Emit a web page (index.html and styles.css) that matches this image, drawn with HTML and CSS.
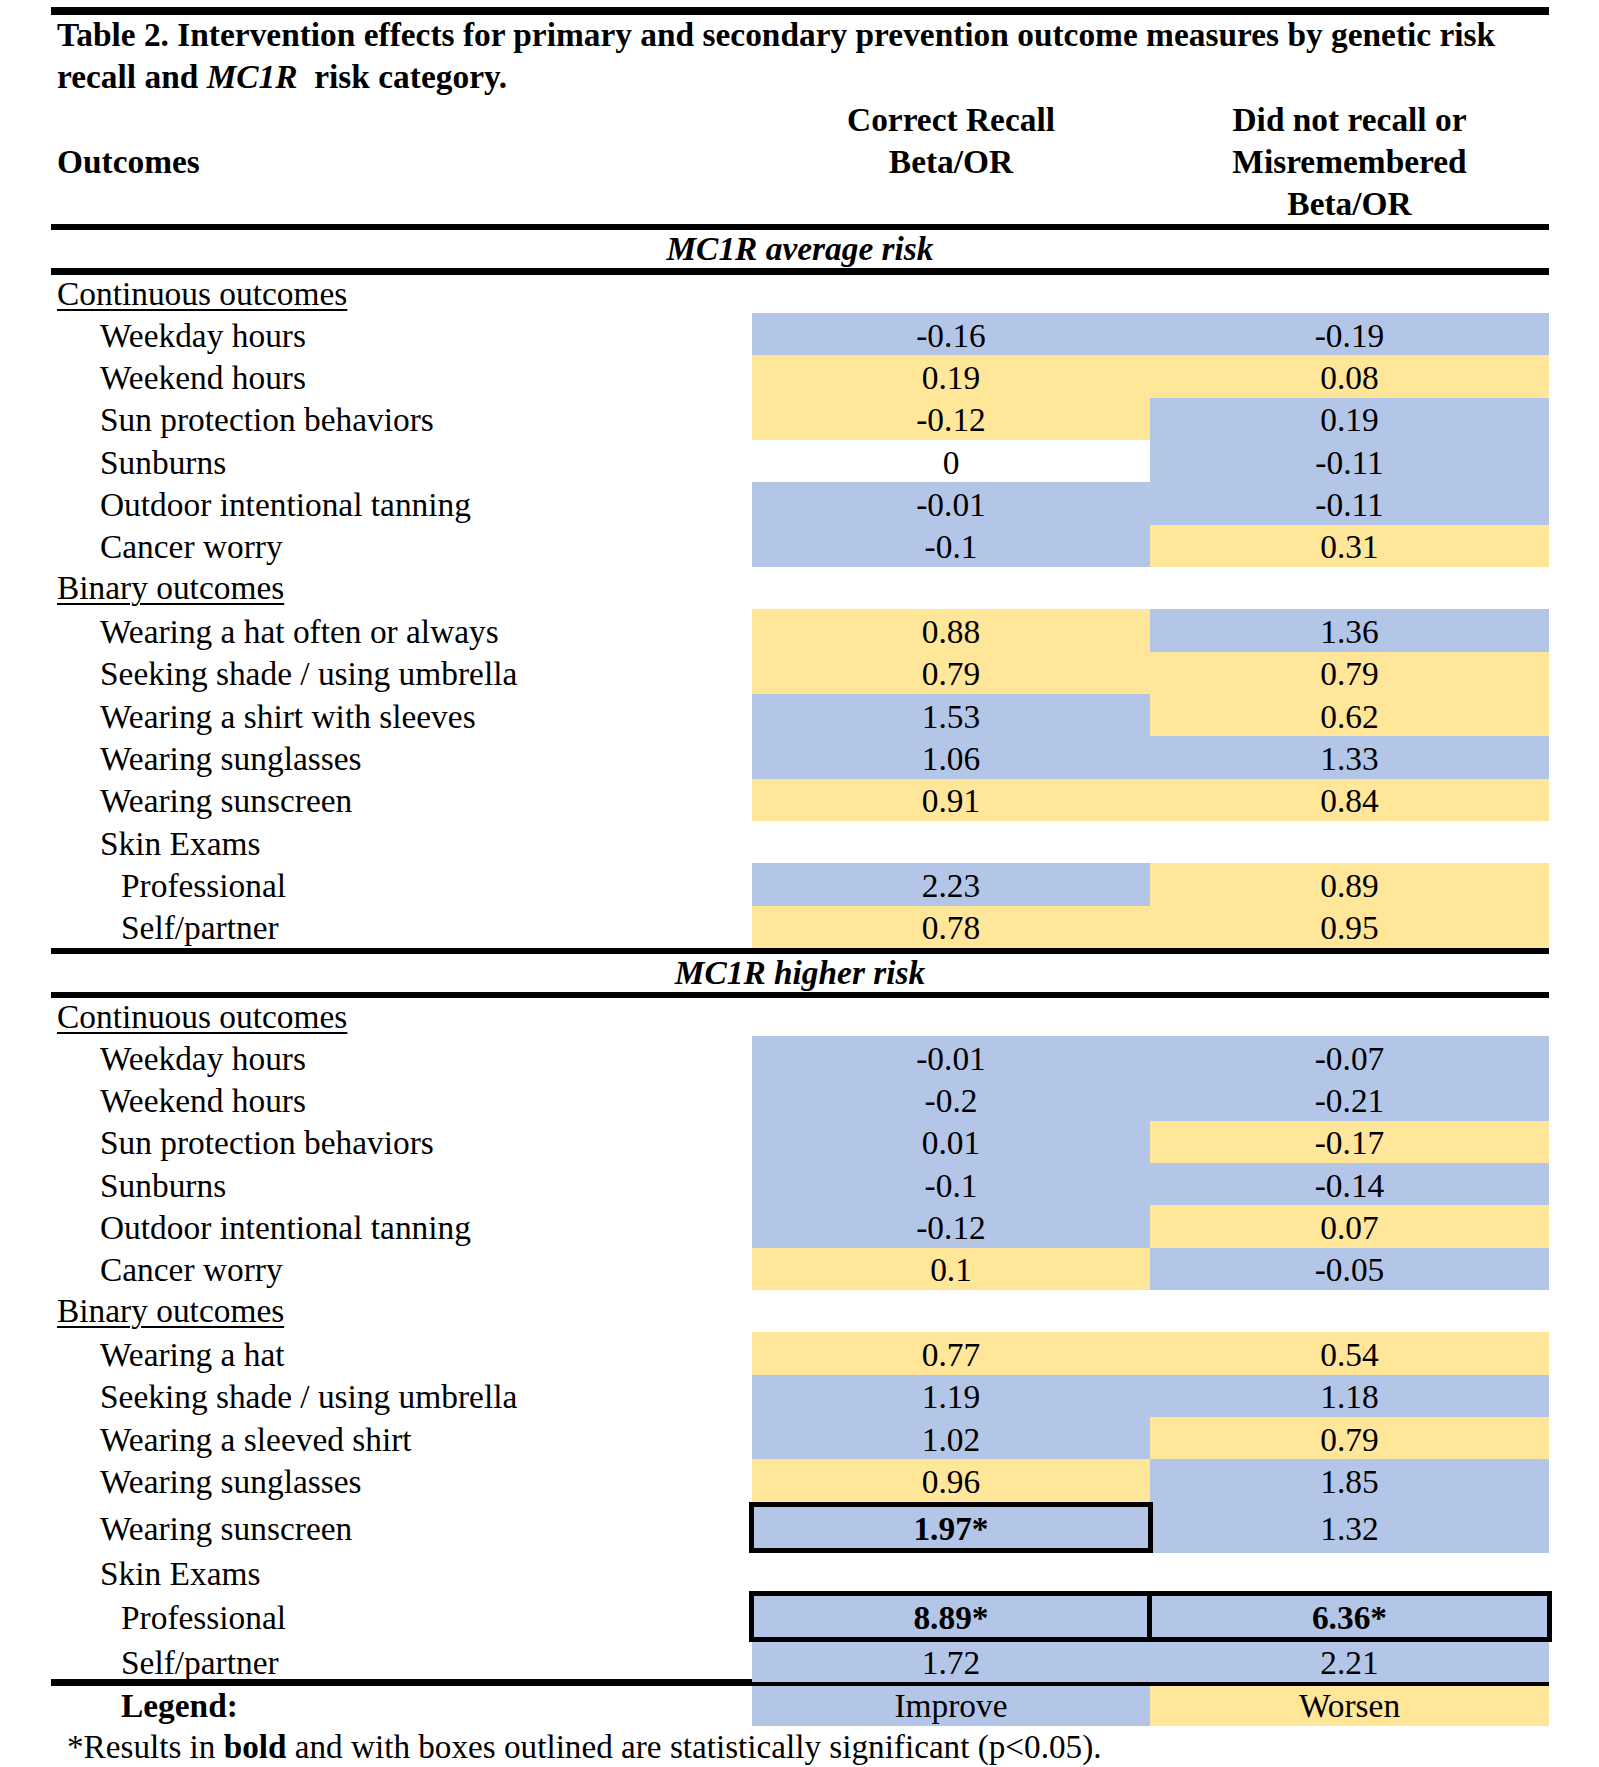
FILE: index.html
```html
<!DOCTYPE html>
<html>
<head>
<meta charset="utf-8">
<link rel="stylesheet" href="styles.css">
</head>
<body>
<div class="page">
  <div class="rule rule-top"></div>
  <div class="title">Table 2. Intervention effects for primary and secondary prevention outcome measures by genetic risk<br>recall and <i>MC1R</i>&nbsp; risk category.</div>
  <div class="head">
    <div class="head-label">Outcomes</div>
    <div class="head-col">Correct Recall<br>Beta/OR</div>
    <div class="head-col">Did not recall or<br>Misremembered<br>Beta/OR</div>
  </div>
  <div class="rule rule-6"></div>
  <div class="section-title">MC1R average risk</div>
  <div class="rule rule-7"></div>

  <div class="row row-group"><div class="lbl group">Continuous outcomes</div><div></div><div></div></div>
  <div class="row"><div class="lbl ind1">Weekday hours</div><div class="cell b">-0.16</div><div class="cell b">-0.19</div></div>
  <div class="row"><div class="lbl ind1">Weekend hours</div><div class="cell y">0.19</div><div class="cell y">0.08</div></div>
  <div class="row"><div class="lbl ind1">Sun protection behaviors</div><div class="cell y">-0.12</div><div class="cell b">0.19</div></div>
  <div class="row"><div class="lbl ind1">Sunburns</div><div class="cell">0</div><div class="cell b">-0.11</div></div>
  <div class="row"><div class="lbl ind1">Outdoor intentional tanning</div><div class="cell b">-0.01</div><div class="cell b">-0.11</div></div>
  <div class="row"><div class="lbl ind1">Cancer worry</div><div class="cell b">-0.1</div><div class="cell y">0.31</div></div>
  <div class="row"><div class="lbl group">Binary outcomes</div><div></div><div></div></div>
  <div class="row"><div class="lbl ind1">Wearing a hat often or always</div><div class="cell y">0.88</div><div class="cell b">1.36</div></div>
  <div class="row"><div class="lbl ind1">Seeking shade / using umbrella</div><div class="cell y">0.79</div><div class="cell y">0.79</div></div>
  <div class="row"><div class="lbl ind1">Wearing a shirt with sleeves</div><div class="cell b">1.53</div><div class="cell y">0.62</div></div>
  <div class="row"><div class="lbl ind1">Wearing sunglasses</div><div class="cell b">1.06</div><div class="cell b">1.33</div></div>
  <div class="row"><div class="lbl ind1">Wearing sunscreen</div><div class="cell y">0.91</div><div class="cell y">0.84</div></div>
  <div class="row"><div class="lbl ind1">Skin Exams</div><div></div><div></div></div>
  <div class="row"><div class="lbl ind2">Professional</div><div class="cell b">2.23</div><div class="cell y">0.89</div></div>
  <div class="row"><div class="lbl ind2">Self/partner</div><div class="cell y">0.78</div><div class="cell y">0.95</div></div>

  <div class="rule rule-6"></div>
  <div class="section-title">MC1R higher risk</div>
  <div class="rule rule-6"></div>

  <div class="row row-group"><div class="lbl group">Continuous outcomes</div><div></div><div></div></div>
  <div class="row"><div class="lbl ind1">Weekday hours</div><div class="cell b">-0.01</div><div class="cell b">-0.07</div></div>
  <div class="row"><div class="lbl ind1">Weekend hours</div><div class="cell b">-0.2</div><div class="cell b">-0.21</div></div>
  <div class="row"><div class="lbl ind1">Sun protection behaviors</div><div class="cell b">0.01</div><div class="cell y">-0.17</div></div>
  <div class="row"><div class="lbl ind1">Sunburns</div><div class="cell b">-0.1</div><div class="cell b">-0.14</div></div>
  <div class="row"><div class="lbl ind1">Outdoor intentional tanning</div><div class="cell b">-0.12</div><div class="cell y">0.07</div></div>
  <div class="row"><div class="lbl ind1">Cancer worry</div><div class="cell y">0.1</div><div class="cell b">-0.05</div></div>
  <div class="row"><div class="lbl group">Binary outcomes</div><div></div><div></div></div>
  <div class="row"><div class="lbl ind1">Wearing a hat</div><div class="cell y">0.77</div><div class="cell y">0.54</div></div>
  <div class="row"><div class="lbl ind1">Seeking shade / using umbrella</div><div class="cell b">1.19</div><div class="cell b">1.18</div></div>
  <div class="row"><div class="lbl ind1">Wearing a sleeved shirt</div><div class="cell b">1.02</div><div class="cell y">0.79</div></div>
  <div class="row"><div class="lbl ind1">Wearing sunglasses</div><div class="cell y">0.96</div><div class="cell b">1.85</div></div>
  <div class="row row-box"><div class="lbl ind1">Wearing sunscreen</div><div class="cell b box">1.97*</div><div class="cell b">1.32</div></div>
  <div class="row row-skin"><div class="lbl ind1">Skin Exams</div><div></div><div></div></div>
  <div class="row row-box"><div class="lbl ind2">Professional</div><div class="cell b box">8.89*</div><div class="cell b box">6.36*</div></div>
  <div class="row row-last"><div class="lbl ind2">Self/partner</div><div class="cell b">1.72</div><div class="cell b">2.21</div></div>

  <div class="rule rule-7"></div>
  <div class="row row-legend"><div class="lbl ind2 legend">Legend:</div><div class="cell b">Improve</div><div class="cell y">Worsen</div></div>
  <div class="footnote">*Results in <b>bold</b> and with boxes outlined are statistically significant (p&lt;0.05).</div>
</div>
</body>
</html>
```

FILE: styles.css
```css
html, body {
  margin: 0;
  padding: 0;
  background: #ffffff;
}

body {
  font-family: "Liberation Serif", "Times New Roman", serif;
  font-size: 33.4px;
  color: #000000;
}

.page {
  margin-left: 51px;
  width: 1498px;
  padding-top: 7px;
}

.rule {
  background: #000000;
}

.rule-top {
  height: 8px;
}

.rule-6 {
  height: 6px;
}

.rule-7 {
  height: 7px;
}

.title {
  font-weight: bold;
  line-height: 42px;
  padding-left: 6px;
  margin-top: -1px;
  margin-bottom: 1px;
}

.title i {
  font-style: italic;
}

.head {
  display: grid;
  grid-template-columns: 701px 398px 399px;
  height: 125px;
  font-weight: bold;
  line-height: 42px;
}

.head-label {
  padding-left: 6px;
  align-self: center;
}

.head-col {
  text-align: center;
}

.section-title {
  height: 38px;
  line-height: 38px;
  text-align: center;
  font-weight: bold;
  font-style: italic;
}

.row {
  display: grid;
  grid-template-columns: 701px 398px 399px;
  height: 42.33px;
}

.row-group {
  height: 38px;
}

.row-box {
  height: 50px;
}

.row-skin {
  height: 39px;
}

.row-last {
  height: 38px;
}

.row-legend {
  height: 40px;
}

.lbl {
  box-sizing: border-box;
  display: flex;
  align-items: center;
  white-space: nowrap;
  padding-top: 3px;
}

.group {
  padding-left: 6px;
  padding-top: 0;
  text-decoration: underline;
  text-decoration-thickness: 2px;
  text-underline-offset: 4px;
}

.ind1 {
  padding-left: 49px;
}

.ind2 {
  padding-left: 70px;
}

.legend {
  font-weight: bold;
}

.cell {
  box-sizing: border-box;
  display: flex;
  align-items: center;
  justify-content: center;
  padding-top: 3px;
}

.row-legend .lbl,
.row-legend .cell {
  padding-top: 0;
}

.b {
  background: #b4c6e7;
}

.y {
  background: #ffe699;
}

.box {
  border: 5px solid #000000;
  margin: 0 -3px;
  font-weight: bold;
  position: relative;
}

.footnote {
  line-height: 42px;
  padding-left: 16px;
  font-size: 33.2px;
}
```
